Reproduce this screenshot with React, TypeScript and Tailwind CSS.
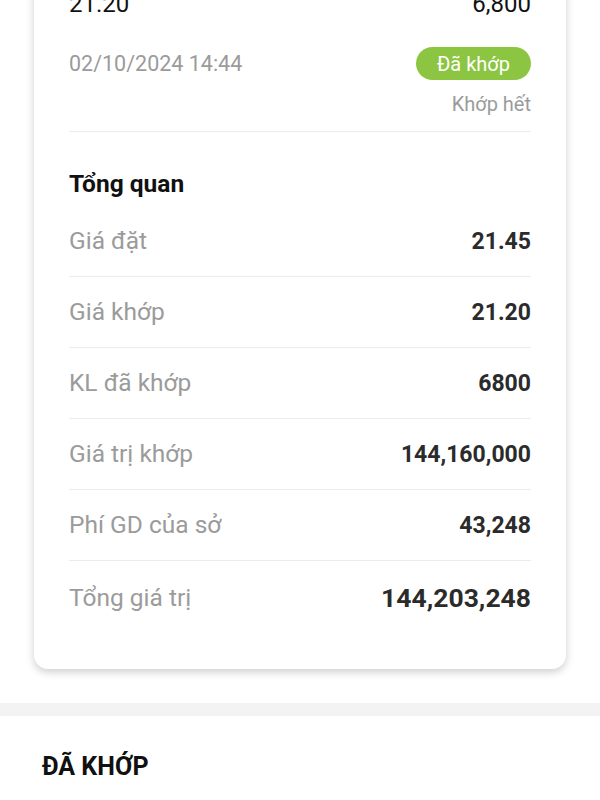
const rows = [
  { label: "Giá đặt", value: "21.45" },
  { label: "Giá khớp", value: "21.20" },
  { label: "KL đã khớp", value: "6800" },
  { label: "Giá trị khớp", value: "144,160,000" },
  { label: "Phí GD của sở", value: "43,248" },
];

const App = () => {
  return (
    <div className="w-[600px] h-[800px] overflow-hidden bg-white font-['Roboto',sans-serif]">
      <div className="px-[34px]">
        <div className="-mt-[10px] rounded-b-[14px] bg-white px-[35px] pb-[34px] shadow-[0_3px_8px_rgba(0,0,0,0.2)]">
          <div className="flex justify-between text-[24px] leading-[28px] text-[#111]">
            <span>21.20</span>
            <span>6,800</span>
          </div>

          <div className="mt-[29px] flex items-center justify-between">
            <span className="text-[21.5px] leading-[26px] text-[#9b9b9b]">02/10/2024 14:44</span>
            <span className="flex h-[33px] items-center rounded-full bg-[#8cc541] px-[21px] text-[20px] text-white">
              Đã khớp
            </span>
          </div>
          <div className="mt-[13px] text-right text-[20px] leading-[22px] text-[#9b9b9b]">Khớp hết</div>

          <div className="mt-[16px] border-t border-[#ececec]" />

          <div className="pt-[39px] text-[24.5px] font-bold leading-[26px] text-[#111]">Tổng quan</div>

          <div className="mt-[9px]">
            {rows.map((r) => (
              <div key={r.label} className="flex h-[71px] items-center justify-between border-b border-[#ececec]">
                <span className="text-[24.5px] leading-[30px] text-[#9b9b9b]">{r.label}</span>
                <span className="pt-[2px] text-[23px] font-bold leading-[30px] text-[#2b2b2b]">{r.value}</span>
              </div>
            ))}
            <div className="flex h-[74px] items-center justify-between">
              <span className="text-[24.5px] leading-[30px] text-[#9b9b9b]">Tổng giá trị</span>
              <span className="text-[26.5px] font-bold leading-[32px] text-[#2b2b2b]">144,203,248</span>
            </div>
          </div>
        </div>
      </div>

      <div className="mt-[34px] h-[13px] bg-[#f3f3f3]" />

      <div className="px-[42px] pt-[36px] text-[25px] font-bold leading-[30px] text-[#111]">ĐÃ KHỚP</div>
    </div>
  );
};

export default App;
